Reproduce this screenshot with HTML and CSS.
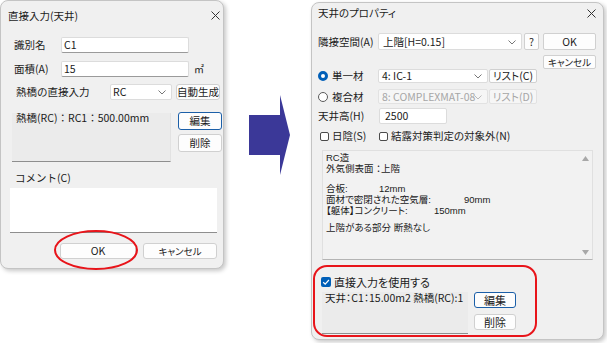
FILE: index.html
```html
<!DOCTYPE html>
<html>
<head>
    <meta charset="UTF-8">
    <title>直接入力(天井)</title>
    <link rel="stylesheet" href="styles.css">
</head>
<body>
    <div class="stage">
        <!-- left dialog -->
        <div class="dlg dlg-left">
            <div class="lt-title">
                <span>直接入力(天井)</span>
                <svg class="close" width="9" height="9" viewBox="0 0 9 9"><path d="M0.5 0.5L8.5 8.5M8.5 0.5L0.5 8.5" stroke="#333" stroke-width="1"/></svg>
            </div>
            <div class="lt-row lt-r1">
                <span class="lt-lab">識別名</span>
                <div class="field lt-input">C1</div>
            </div>
            <div class="lt-row lt-r2">
                <span class="lt-lab">面積(A)</span>
                <div class="field lt-input">15</div>
                <span class="unit">㎡</span>
            </div>
            <div class="lt-row lt-r3">
                <span class="lt-lab3">熱橋の直接入力</span>
                <div class="field select lt-select">RC
                    <svg class="chev" width="8" height="5" viewBox="0 0 8 5"><path d="M0.5 0.5L4 4L7.5 0.5" fill="none" stroke="#777" stroke-width="1"/></svg>
                </div>
                <div class="btn lt-auto">自動生成</div>
            </div>
            <div class="lt-r4">
                <div class="lt-box">熱橋(RC)：RC1：500.00mm</div>
                <div class="lt-btns">
                    <div class="btn btn-def lt-b">編集</div>
                    <div class="btn lt-b">削除</div>
                </div>
            </div>
            <div class="lt-comment">コメント(C)</div>
            <div class="lt-area"></div>
            <div class="lt-foot">
                <div class="btn lt-ok">OK</div>
                <div class="btn lt-cancel">キャンセル</div>
            </div>
        </div>

        <div class="arrow">
            <svg width="41" height="80" viewBox="0 0 41 80"><polygon points="0,20 31,20 31,0 41,40 31,80 31,60 0,60" fill="#3b3898"/></svg>
        </div>

        <!-- right dialog -->
        <div class="dlg dlg-right">
            <div class="rt-title">
                <span>天井のプロパティ</span>
                <svg class="close" width="9" height="9" viewBox="0 0 9 9"><path d="M0.5 0.5L8.5 8.5M8.5 0.5L0.5 8.5" stroke="#333" stroke-width="1"/></svg>
            </div>
            <div class="rt-top">
                <div class="rt-row">
                    <span class="rt-lab">隣接空間(A)</span>
                    <div class="field select rt-sel-a">上階[H=0.15]
                        <svg class="chev" width="8" height="5" viewBox="0 0 8 5"><path d="M0.5 0.5L4 4L7.5 0.5" fill="none" stroke="#777" stroke-width="1"/></svg>
                    </div>
                    <div class="btn rt-q">?</div>
                </div>
                <div class="rt-side">
                    <div class="btn rt-ok">OK</div>
                    <div class="btn rt-cancel">キャンセル</div>
                </div>
            </div>
            <div class="rt-row rt-single">
                <span class="rt-lab radio-lab"><span class="radio on"></span>単一材</span>
                <div class="field select rt-sel-m">4: IC-1
                    <svg class="chev" width="8" height="5" viewBox="0 0 8 5"><path d="M0.5 0.5L4 4L7.5 0.5" fill="none" stroke="#777" stroke-width="1"/></svg>
                </div>
                <div class="btn rt-list">リスト(C)</div>
            </div>
            <div class="rt-row rt-multi">
                <span class="rt-lab radio-lab"><span class="radio"></span>複合材</span>
                <div class="field select rt-sel-m disabled">8: COMPLEXMAT-08
                    <svg class="chev" width="8" height="5" viewBox="0 0 8 5"><path d="M0.5 0.5L4 4L7.5 0.5" fill="none" stroke="#bbb" stroke-width="1"/></svg>
                </div>
                <div class="btn rt-list disabled">リスト(D)</div>
            </div>
            <div class="rt-row rt-height">
                <span class="rt-lab rt-lab-h">天井高(H)</span>
                <div class="field rt-input">2500</div>
            </div>
            <div class="rt-checks">
                <span class="chk-item chk-first"><span class="chk"></span>日陰(S)</span>
                <span class="chk-item"><span class="chk"></span>結露対策判定の対象外(N)</span>
            </div>
            <div class="rt-info">
                <div class="rt-text">
                    <div class="ln">RC造</div>
                    <div class="ln">外気側表面 ：上階</div>
                    <div class="gap-a"></div>
                    <div class="ln"><span class="k1">合板:</span>12mm</div>
                    <div class="ln"><span class="k2">面材で密閉された空気層:</span>90mm</div>
                    <div class="ln"><span class="k3">【躯体】コンクリート:</span>150mm</div>
                    <div class="gap-b"></div>
                    <div class="ln">上階がある部分 断熱なし</div>
                </div>
                <div class="scroll">
                    <svg width="7" height="5" viewBox="0 0 7 5"><polygon points="3.5,0 7,5 0,5" fill="#a8a8a8"/></svg>
                    <svg width="7" height="5" viewBox="0 0 7 5"><polygon points="0,0 7,0 3.5,5" fill="#a8a8a8"/></svg>
                </div>
            </div>
            <div class="rt-direct">
                <span class="chk on">
                    <svg width="10" height="10" viewBox="0 0 10 10"><path d="M2.2 5.2L4.2 7.1L7.9 3" fill="none" stroke="#fff" stroke-width="1.2"/></svg>
                </span>
                直接入力を使用する
            </div>
            <div class="rt-lower">
                <div class="rt-box">天井：C1：15.00m2 熱橋(RC):1</div>
                <div class="rt-btns">
                    <div class="btn btn-def rt-b">編集</div>
                    <div class="btn rt-b">削除</div>
                </div>
            </div>
        </div>

        <!-- red annotation marks -->
        <svg class="marks" width="607" height="343" viewBox="0 0 607 343">
            <ellipse cx="96" cy="250" rx="41" ry="19" fill="none" stroke="#e8141a" stroke-width="2"/>
            <rect x="314" y="266" width="222" height="70" rx="13" fill="none" stroke="#e8141a" stroke-width="2"/>
        </svg>
    </div>
</body>
</html>
```

FILE: styles.css
```css
/* two dialogs side by side with an arrow */
body {
    margin: 0;
    background: #fff;
    font-family: "Noto Sans CJK JP", "Noto Sans", sans-serif;
    color: #1b1b1b;
}

.stage {
    position: relative;
    width: 607px;
    height: 343px;
    display: flex;
    align-items: flex-start;
    overflow: hidden;
}

.dlg {
    box-sizing: border-box;
    background: #f0f0f0;
    border: 1px solid #c4c4c4;
    border-radius: 8px;
    box-shadow: 2px 2px 4px rgba(0, 0, 0, 0.22);
    font-size: 10.5px;
    line-height: 12px;
}

.field {
    box-sizing: border-box;
    background: #fff;
    border: 1px solid #dcdcdc;
    border-bottom-color: #9a9a9a;
    border-radius: 2px;
    padding-left: 2px;
    display: flex;
    align-items: center;
    white-space: nowrap;
    overflow: hidden;
}

.select {
    position: relative;
    border-bottom-color: #dcdcdc;
}

.chev {
    position: absolute;
    right: 5px;
    top: 50%;
    margin-top: -2px;
}

.btn {
    box-sizing: border-box;
    background: #fdfdfd;
    border: 1px solid #d0d0d0;
    border-radius: 3px;
    display: flex;
    align-items: center;
    justify-content: center;
    white-space: nowrap;
}

.btn-def {
    border-color: #1b5fa8;
}

.disabled {
    color: #a6a6a6;
    background: #f6f6f6;
    border-color: #e2e2e2;
}

/* ---------- left dialog ---------- */
.dlg-left {
    width: 224px;
    height: 269px;
    flex-shrink: 0;
}

.lt-title {
    height: 29px;
    display: flex;
    align-items: center;
    justify-content: space-between;
    padding: 0 3px 0 7px;
}

.lt-row {
    display: flex;
    align-items: center;
    height: 16px;
    padding-left: 13px;
}

.lt-r1 { margin-top: 7px; }
.lt-r2 { margin-top: 8px; }
.lt-r3 { margin-top: 7px; padding-left: 15px; }

.lt-lab { width: 47px; }
.lt-lab3 { width: 94px; }

.lt-input {
    width: 128px;
    height: 16px;
}

.unit {
    margin-left: 5px;
    font-size: 10px;
}

.lt-select {
    width: 62px;
    height: 16px;
}

.lt-auto {
    width: 44px;
    height: 16px;
    margin-left: 4px;
}

.lt-r4 {
    margin-top: 12px;
    display: flex;
    align-items: flex-start;
    padding-left: 11px;
}

.lt-box {
    box-sizing: border-box;
    width: 159px;
    height: 49px;
    margin-top: 1px;
    padding: 0 4px;
    line-height: 10px;
    background: #ebebeb;
    border-right: 1px solid #e2e2e2;
    border-bottom: 1px solid #8e8e8e;
}

.lt-btns {
    margin-left: 7px;
    display: flex;
    flex-direction: column;
    gap: 4px;
}

.lt-b {
    width: 44px;
    height: 18px;
}

.lt-comment {
    margin-top: 10px;
    height: 12px;
    padding-left: 14px;
}

.lt-area {
    box-sizing: border-box;
    margin: 4px 0 0 9px;
    width: 207px;
    height: 45px;
    background: #fff;
    border-bottom: 1px solid #8e8e8e;
}

.lt-foot {
    margin-top: 10px;
    display: flex;
    gap: 7px;
    padding-left: 59px;
}

.lt-ok {
    width: 76px;
    height: 16px;
}

.lt-cancel {
    width: 74px;
    height: 16px;
    font-size: 9.5px;
    font-feature-settings: "palt";
}

/* ---------- arrow ---------- */
.arrow {
    margin: 95px 0 0 25px;
    width: 41px;
    height: 80px;
    flex-shrink: 0;
}

/* ---------- right dialog ---------- */
.dlg-right {
    margin: 2px 0 0 21px;
    width: 293px;
    height: 338px;
    flex-shrink: 0;
    font-size: 10.5px;
    font-feature-settings: "palt";
}

.rt-title {
    height: 20px;
    display: flex;
    align-items: center;
    justify-content: space-between;
    padding: 0 7px 0 6px;
}

.rt-top {
    margin-top: 10px;
    height: 36px;
    display: flex;
    align-items: flex-start;
    padding-left: 6px;
}

.rt-row {
    display: flex;
    align-items: center;
    padding-left: 6px;
}

.rt-top .rt-row {
    padding-left: 0;
}

.rt-lab {
    width: 60px;
    display: flex;
    align-items: center;
}

.rt-lab-h { width: 61px; }

.rt-sel-a {
    width: 144px;
    height: 17px;
    padding-left: 4px;
}

.rt-q {
    width: 15px;
    height: 17px;
    margin-left: 2px;
    border-radius: 2px;
}

.rt-side {
    margin-left: 4px;
    display: flex;
    flex-direction: column;
    gap: 5px;
}

.rt-ok {
    width: 53px;
    height: 17px;
    border-radius: 2px;
}

.rt-cancel {
    width: 53px;
    height: 14px;
    border-radius: 2px;
    font-size: 9.5px;
}

.rt-single { height: 14px; }
.rt-multi { height: 15px; margin-top: 6px; }

.radio {
    box-sizing: border-box;
    width: 10px;
    height: 10px;
    border-radius: 50%;
    border: 1px solid #5a5a5a;
    background: #fff;
    margin-right: 4px;
}

.radio.on {
    border: 3px solid #005fb8;
}

.rt-sel-m {
    width: 110px;
    height: 100%;
    padding-left: 3px;
}

.rt-list {
    width: 48px;
    height: 100%;
    margin-left: 1px;
    border-radius: 2px;
}

.rt-height {
    margin-top: 4px;
    height: 16px;
}

.rt-input {
    width: 68px;
    height: 16px;
    padding-left: 5px;
    border-bottom-color: #dcdcdc;
}

.rt-checks {
    margin-top: 6px;
    height: 12px;
    display: flex;
    align-items: center;
    padding-left: 8px;
}

.chk-item {
    display: flex;
    align-items: center;
}

.chk-first { width: 59px; }

.chk {
    box-sizing: border-box;
    width: 9px;
    height: 9px;
    border: 1px solid #4a4a4a;
    border-radius: 2px;
    background: #fff;
    margin-right: 3px;
    display: flex;
}

.rt-info {
    box-sizing: border-box;
    margin: 8px 0 0 10px;
    width: 271px;
    height: 110px;
    display: flex;
    background: #f2f2f2;
    border: 1px solid #e0e0e0;
    border-bottom-color: #b4b4b4;
}

.rt-text {
    flex: 1;
    padding: 1px 0 0 3px;
    font-family: "Liberation Sans", "Noto Sans CJK JP", sans-serif;
    font-size: 9.5px;
    line-height: 11px;
    white-space: nowrap;
}

.ln { height: 11px; }
.gap-a { height: 9px; }
.gap-b { height: 6px; }

.k1, .k2, .k3 { display: inline-block; }
.k1 { width: 53px; }
.k2 { width: 138px; }
.k3 { width: 108px; }

.scroll {
    width: 14px;
    display: flex;
    flex-direction: column;
    justify-content: space-between;
    align-items: center;
    padding: 5px 0 4px;
}

.rt-direct {
    margin-top: 16px;
    height: 12px;
    display: flex;
    align-items: center;
    padding-left: 9px;
    font-size: 11px;
}

.chk.on {
    width: 10px;
    height: 10px;
    border: none;
    background: #005fb8;
}

.rt-lower {
    margin-top: 4px;
    display: flex;
    align-items: flex-start;
    padding-left: 10px;
}

.rt-box {
    box-sizing: border-box;
    width: 146px;
    height: 42px;
    padding-left: 3px;
    background: #ebebeb;
    border-bottom: 1px solid #8e8e8e;
    white-space: nowrap;
}

.rt-btns {
    margin-left: 6px;
    display: flex;
    flex-direction: column;
    gap: 6px;
}

.rt-b {
    width: 42px;
    height: 16px;
    font-size: 11px;
}

/* annotation marks */
.marks {
    position: absolute;
    left: 0;
    top: 0;
    pointer-events: none;
}
```
